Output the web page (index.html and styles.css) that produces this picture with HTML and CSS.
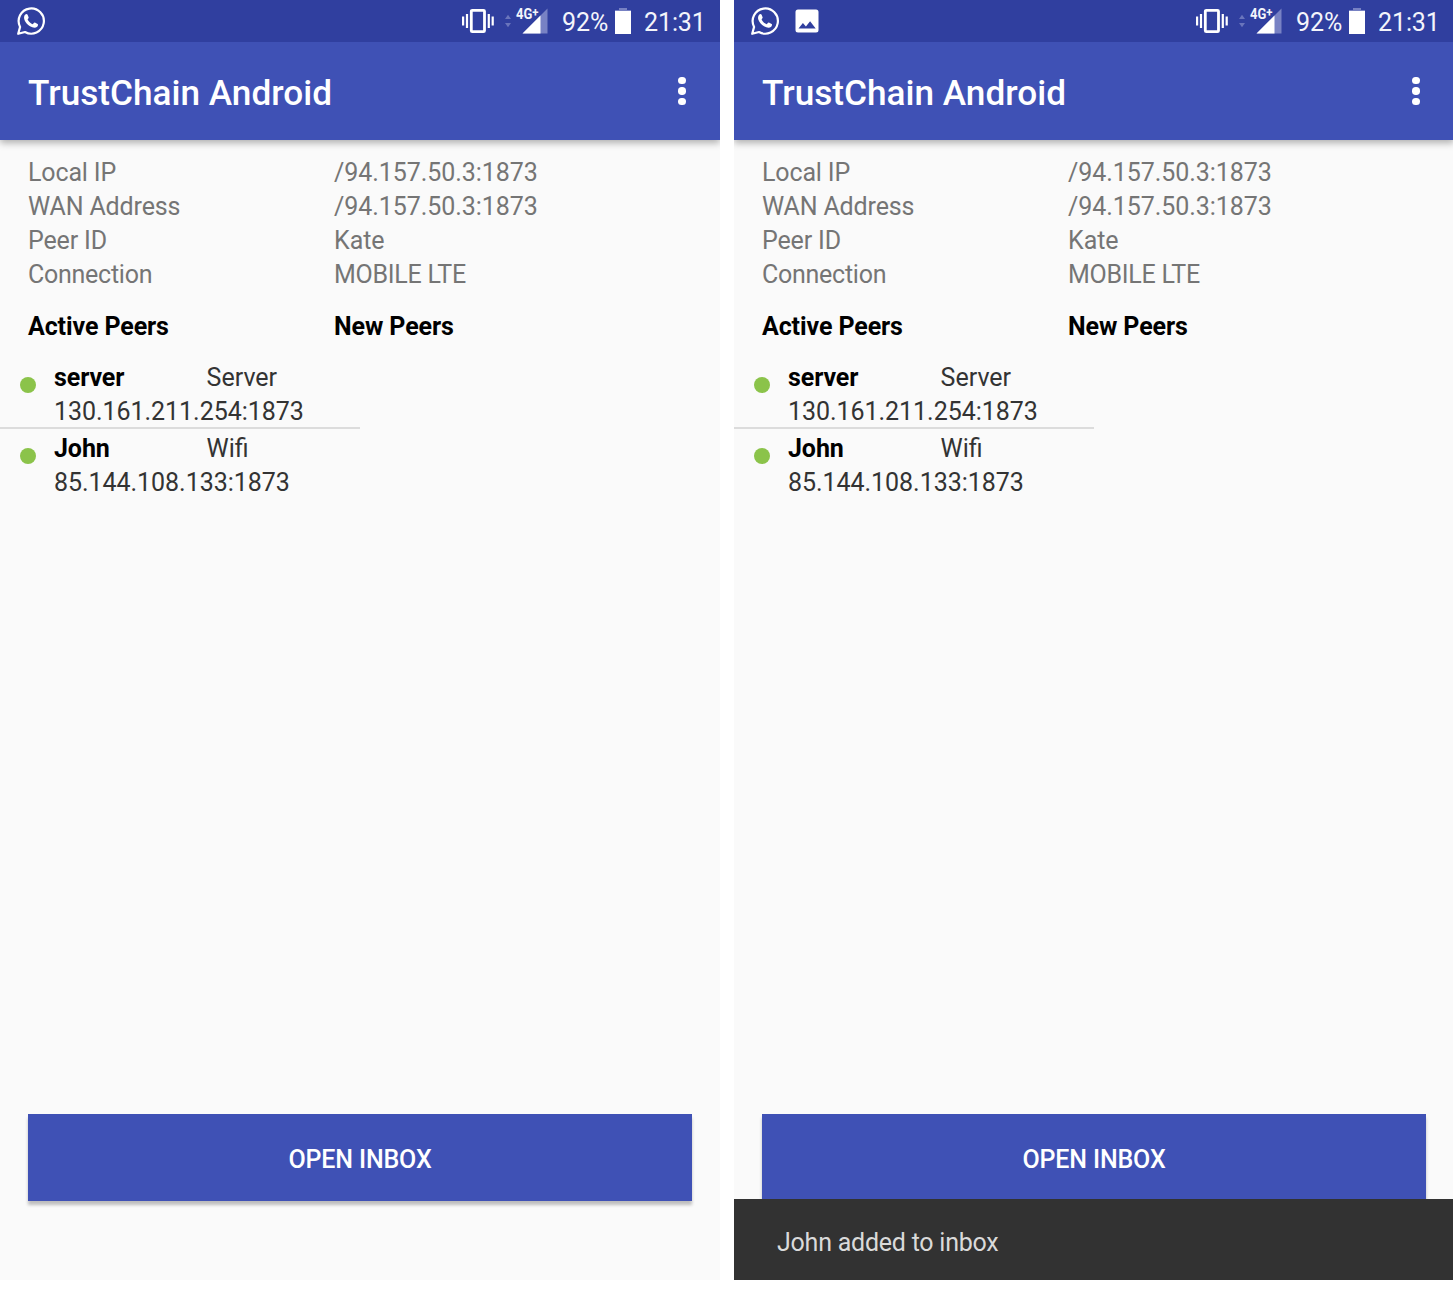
FILE: index.html
```html
<!DOCTYPE html>
<html lang="en">
<head>
<meta charset="utf-8">
<title>TrustChain Android</title>
<link rel="stylesheet" href="styles.css">
</head>
<body>
<svg class="sprite" aria-hidden="true">
  <symbol id="whatsapp" viewBox="0 0 30 30">
    <path d="M2.2 27.8 4.1 20.9A12.6 12.6 0 1 1 9 26z" fill="none" stroke="#fff" stroke-width="2.2" stroke-linejoin="round"/>
    <path d="M9.3 8.6c.8-.8 1.9-.7 2.3.2l1 2.4c.3.8-.7 1.6-1 2.2 1.1 2.2 2.8 3.8 5.2 4.8.7-.6 1.3-1.9 2.1-1.6l2.7 1.3c.8.4.4 2-.4 2.8-1.9 1.6-4.6 1-7.2-.5-2.500-1.500-4.600-3.900-5.500-6.200-.8-2.200-.6-4 .8-5.400z" fill="#fff"/>
  </symbol>
  <symbol id="picture" viewBox="0 0 24 24">
    <path fill="#fff" fill-rule="evenodd" d="M3 .5h18A2.500 2.500 0 0 1 23.500 3v18a2.500 2.500 0 0 1-2.500 2.500H3A2.500 2.500 0 0 1 .5 21V3A2.500 2.500 0 0 1 3 .5zM3.500 19.500h17.200l-5.600-7.300-4.200 5.300-3-3.500z"/>
  </symbol>
  <symbol id="vibrate" viewBox="0 0 32 26">
    <rect x="9.300" y="2.300" width="13.200" height="21.400" rx="1" fill="none" stroke="#fff" stroke-width="2.800"/>
    <path d="M1.100 8.500v9M5 6v14M26.800 6v14M30.700 8.500v9" stroke="#fff" stroke-width="2.200"/>
  </symbol>
  <symbol id="traffic" viewBox="0 0 8 14">
    <path d="M1 5 4 .8l3 4.200zM1 9h6l-3 4.200z" fill="#6a75bc"/>
  </symbol>
  <symbol id="signal" viewBox="0 0 26 26">
    <path d="M25.500.5v25H.5z" fill="#7882c4"/>
    <path d="M18.500 7.500v18H.5z" fill="#fff"/>
  </symbol>
  <symbol id="battery" viewBox="0 0 16 26">
    <path d="M4 0h8v2h4v2H0V2h4z" fill="#7781c3"/>
    <path d="M0 3h16v23H0z" fill="#fff"/>
  </symbol>
</svg>

<main class="screens">
  <section class="phone">
    <header class="status">
      <div class="notices">
        <svg class="whatsapp"><use href="#whatsapp"/></svg>
      </div>
      <svg class="vibrate"><use href="#vibrate"/></svg>
      <svg class="traffic"><use href="#traffic"/></svg>
      <span class="network"><svg class="signal"><use href="#signal"/></svg><b class="network-type">4G<span class="plus">+</span></b></span>
      <span class="percent">92%</span>
      <svg class="battery"><use href="#battery"/></svg>
      <span class="clock">21:31</span>
    </header>
    <div class="toolbar">
      <h1 class="title">TrustChain Android</h1>
      <div class="overflow"><i class="dot"></i><i class="dot"></i><i class="dot"></i></div>
    </div>
    <div class="content">
      <dl class="info">
        <dt>Local IP</dt><dd>/94.157.50.3:1873</dd>
        <dt>WAN Address</dt><dd>/94.157.50.3:1873</dd>
        <dt>Peer ID</dt><dd>Kate</dd>
        <dt class="tight">Connection</dt><dd class="tight">MOBILE LTE</dd>
      </dl>
      <div class="headings"><h2>Active Peers</h2><h2>New Peers</h2></div>
      <ul class="peers">
        <li class="peer"><i class="online"></i><b class="name">server</b><span class="kind">Server</span><span class="address">130.161.211.254:1873</span></li>
        <li class="peer"><i class="online"></i><b class="name">John</b><span class="kind">Wifi</span><span class="address">85.144.108.133:1873</span></li>
      </ul>
      <button class="inbox">OPEN INBOX</button>
    </div>
  </section>

  <section class="phone">
    <header class="status">
      <div class="notices">
        <svg class="whatsapp"><use href="#whatsapp"/></svg>
        <svg class="picture"><use href="#picture"/></svg>
      </div>
      <svg class="vibrate"><use href="#vibrate"/></svg>
      <svg class="traffic"><use href="#traffic"/></svg>
      <span class="network"><svg class="signal"><use href="#signal"/></svg><b class="network-type">4G<span class="plus">+</span></b></span>
      <span class="percent">92%</span>
      <svg class="battery"><use href="#battery"/></svg>
      <span class="clock">21:31</span>
    </header>
    <div class="toolbar">
      <h1 class="title">TrustChain Android</h1>
      <div class="overflow"><i class="dot"></i><i class="dot"></i><i class="dot"></i></div>
    </div>
    <div class="content">
      <dl class="info">
        <dt>Local IP</dt><dd>/94.157.50.3:1873</dd>
        <dt>WAN Address</dt><dd>/94.157.50.3:1873</dd>
        <dt>Peer ID</dt><dd>Kate</dd>
        <dt class="tight">Connection</dt><dd class="tight">MOBILE LTE</dd>
      </dl>
      <div class="headings"><h2>Active Peers</h2><h2>New Peers</h2></div>
      <ul class="peers">
        <li class="peer"><i class="online"></i><b class="name">server</b><span class="kind">Server</span><span class="address">130.161.211.254:1873</span></li>
        <li class="peer"><i class="online"></i><b class="name">John</b><span class="kind">Wifi</span><span class="address">85.144.108.133:1873</span></li>
      </ul>
      <button class="inbox">OPEN INBOX</button>
    </div>
    <div class="snackbar">John added to inbox</div>
  </section>
</main>
</body>
</html>
```
FILE: styles.css
```css
* { box-sizing: border-box; }
body {
  margin: 0;
  background: #fff;
  font: 25px/34px Roboto, sans-serif;
  overflow: hidden;
}
h1, h2, dl, dd, ul { margin: 0; padding: 0; }
svg { display: block; flex: none; }
.sprite { position: absolute; width: 0; height: 0; }

.screens { display: flex; gap: 14px; }
.phone {
  position: relative;
  flex: none;
  display: flex;
  flex-direction: column;
  width: 720px;
  height: 1280px;
  background: #fafafa;
  overflow: hidden;
}

.status {
  z-index: 2;
  display: flex;
  align-items: flex-start;
  height: 42px;
  padding: 0 14px 0 16px;
  background: #303f9f;
  color: #f4f5fb;
}
.notices { flex: 1; display: flex; gap: 15px; padding-top: 6px; }
.whatsapp { width: 30px; height: 30px; }
.picture { width: 24px; height: 24px; margin-top: 3px; }
.vibrate { width: 32px; height: 26px; margin: 8px 10px 0 0; }
.traffic { width: 8px; height: 14px; margin: 14px 10px 0 0; }
.network { position: relative; width: 26px; height: 26px; margin: 8px 14px 0 0; }
.signal { width: 26px; height: 26px; }
.network-type {
  position: absolute;
  left: -6px;
  top: -1px;
  font-size: 15.5px;
  line-height: 15px;
  white-space: nowrap;
  transform: scaleX(.84);
  transform-origin: left;
  -webkit-text-stroke: 2px #303f9f;
  paint-order: stroke fill;
}
.plus { font-size: 13.5px; vertical-align: 2px; line-height: 1px; }
.percent, .clock { width: 46px; padding-top: 6px; letter-spacing: -.1px; }
.clock { width: 62px; }
.battery { width: 16px; height: 26px; margin: 8px 13px 0 7px; }

.toolbar {
  z-index: 1;
  display: flex;
  align-items: center;
  justify-content: space-between;
  height: 98px;
  padding: 2px 34.5px 0 28px;
  background: #3f51b5;
  box-shadow: 0 3px 7px rgba(0, 0, 0, .3);
}
.title { padding-top: 1px; color: #fff; font-size: 35.2px; font-weight: 500; line-height: 42px; }
.overflow { display: flex; flex-direction: column; gap: 3.2px; padding-bottom: 2px; }
.dot { width: 7.5px; height: 7.5px; border-radius: 50%; background: #fff; }

.content { flex: 1; display: flex; flex-direction: column; padding-top: 16px; }
.info { display: grid; grid-template-columns: 306px 1fr; padding-left: 28px; color: #757575; letter-spacing: -.06px; }
dt { letter-spacing: -.14px; }
.tight { letter-spacing: -.26px; }
.headings { display: grid; grid-template-columns: 306px 1fr; padding: 18px 0 17px 28px; }
.headings h2 { font-size: 25px; font-weight: 700; line-height: 34px; letter-spacing: -.1px; }
.peers { width: 360px; list-style: none; color: #333; }
.peer {
  display: grid;
  grid-template-columns: 34px 153px 1fr;
  grid-template-rows: 34px 34px;
  padding-left: 20px;
}
.peer:first-child { height: 68px; margin-bottom: 3px; border-bottom: 2px solid #dcdcdc; }
.online { width: 16px; height: 16px; margin-top: 16px; border-radius: 50%; background: #8bc34a; }
.name { color: #000; letter-spacing: -.1px; }
.kind { margin-left: -.4px; }
.address { grid-column: 2 / -1; letter-spacing: -.05px; }
.inbox {
  height: 87px;
  margin: auto 28px 79px;
  padding: 4px 0 0;
  border: 0;
  background: #3f51b5;
  color: #fff;
  font: 500 25px/34px Roboto, sans-serif;
  letter-spacing: -.15px;
  box-shadow: 0 4px 3px rgba(0, 0, 0, .24);
}
.snackbar {
  position: absolute;
  inset: auto 0 0;
  height: 81px;
  padding: 27px 43px 0;
  background: #323232;
  color: #dadada;
  letter-spacing: -.23px;
}
```
